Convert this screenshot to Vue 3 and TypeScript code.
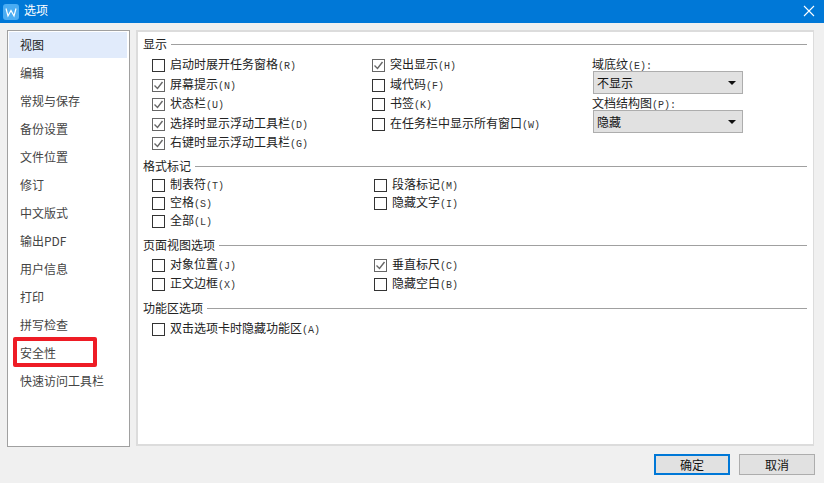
<script setup lang="ts">
interface Opt { t: string; k?: string; c?: boolean; dim?: boolean }
const nav = ['视图','编辑','常规与保存','备份设置','文件位置','修订','中文版式','输出PDF','用户信息','打印','拼写检查','安全性','快速访问工具栏']
const show1: Opt[] = [
  { t: '启动时展开任务窗格', k: '(R)' },
  { t: '屏幕提示', k: '(N)', c: true },
  { t: '状态栏', k: '(U)', c: true },
  { t: '选择时显示浮动工具栏', k: '(D)', c: true },
  { t: '右键时显示浮动工具栏', k: '(G)', c: true },
]
const show2: Opt[] = [
  { t: '突出显示', k: '(H)', c: true, dim: true },
  { t: '域代码', k: '(F)' },
  { t: '书签', k: '(K)' },
  { t: '在任务栏中显示所有窗口', k: '(W)' },
]
const fmt1: Opt[] = [{ t: '制表符', k: '(T)' }, { t: '空格', k: '(S)' }, { t: '全部', k: '(L)' }]
const fmt2: Opt[] = [{ t: '段落标记', k: '(M)' }, { t: '隐藏文字', k: '(I)' }]
const page1: Opt[] = [{ t: '对象位置', k: '(J)' }, { t: '正文边框', k: '(X)' }]
const page2: Opt[] = [{ t: '垂直标尺', k: '(C)', c: true }, { t: '隐藏空白', k: '(B)' }]
const groups = [
  { title: '格式标记', cols: [fmt1, fmt2], cls: 'g-fmt' },
  { title: '页面视图选项', cols: [page1, page2], cls: 'g-page' },
  { title: '功能区选项', cols: [[{ t: '双击选项卡时隐藏功能区', k: '(A)' }] as Opt[]], cls: 'g-rib' },
]
</script>

<template>
  <div class="win">
    <header class="title">
      <svg class="logo" width="16" height="16" viewBox="0 0 16 16">
        <rect width="16" height="16" rx="3" fill="#4badf3" />
        <path d="M3 4.5 L5 12 L8 6.5 L11 12 L13 4.5" fill="none" stroke="#fff" stroke-width="1.2" />
      </svg>
      <span class="title-text">选项</span>
      <svg class="close" width="12" height="12" viewBox="0 0 12 12">
        <path d="M1 1 L11 11 M11 1 L1 11" stroke="#fff" stroke-width="1.1" fill="none" />
      </svg>
    </header>
    <main class="content">
      <nav class="list">
        <div v-for="(n, i) in nav" :key="n" class="item" :class="{ sel: i === 0, mark: n === '安全性' }">{{ n }}</div>
      </nav>
      <section class="panel">
        <div class="group g-show">
          <div class="ghead"><span>显示</span><i></i></div>
          <div class="gbody">
            <div class="col c1">
              <label v-for="o in show1" :key="o.t" class="opt">
                <span class="box" :class="{ on: o.c }">
                  <svg v-if="o.c" width="11" height="11" viewBox="0 0 11 11"><path d="M1.5 5.5 L4.5 8.5 L9.5 2" fill="none" stroke="#666" stroke-width="1.4" /></svg>
                </span>
                <span>{{ o.t }}<b>{{ o.k }}</b></span>
              </label>
            </div>
            <div class="col c2">
              <label v-for="o in show2" :key="o.t" class="opt">
                <span class="box" :class="{ on: o.c }">
                  <svg v-if="o.c" width="11" height="11" viewBox="0 0 11 11"><path d="M1.5 5.5 L4.5 8.5 L9.5 2" fill="none" stroke="#666" stroke-width="1.4" /></svg>
                </span>
                <span>{{ o.t }}<b>{{ o.k }}</b></span>
              </label>
            </div>
            <div class="fields">
              <div class="flabel">域底纹<b>(E):</b></div>
              <div class="select"><span>不显示</span><em></em></div>
              <div class="flabel">文档结构图<b>(P):</b></div>
              <div class="select"><span>隐藏</span><em></em></div>
            </div>
          </div>
        </div>
        <div v-for="g in groups" :key="g.title" class="group" :class="g.cls">
          <div class="ghead"><span>{{ g.title }}</span><i></i></div>
          <div class="gbody">
            <div v-for="(col, ci) in g.cols" :key="ci" class="col" :class="ci === 0 ? 'c1' : 'c2b'">
              <label v-for="o in col" :key="o.t" class="opt">
                <span class="box" :class="{ on: o.c }">
                  <svg v-if="o.c" width="11" height="11" viewBox="0 0 11 11"><path d="M1.5 5.5 L4.5 8.5 L9.5 2" fill="none" stroke="#666" stroke-width="1.4" /></svg>
                </span>
                <span>{{ o.t }}<b>{{ o.k }}</b></span>
              </label>
            </div>
          </div>
        </div>
      </section>
    </main>
    <footer class="foot">
      <button class="btn primary">确定</button>
      <button class="btn">取消</button>
    </footer>
  </div>
</template>

<style>
html, body { margin: 0; background: #f0f0f0; }
</style>

<style scoped>
.win {
  width: 824px; height: 483px; display: flex; flex-direction: column; overflow: hidden;
  background: #f0f0f0; color: #222;
  font: 12px/16px "Noto Sans CJK SC", sans-serif;
}
.title { height: 23px; flex: none; background: #0078d7; display: flex; align-items: center; padding: 0 9px 0 3px; color: #fff; }
.logo { flex: none; }
.title-text { margin-left: 5px; flex: 1; margin-bottom: 4px; }
.close { flex: none; margin-bottom: 1px; }
.content { flex: none; height: 417px; margin-top: 7px; padding: 0 10px 0 7px; display: flex; gap: 6px; }
.list { width: 123px; height: 417px; box-sizing: border-box; background: #fff; border: 1px solid #a0a0a0; padding: 1px 2px 0 1px; flex: none; }
.item { height: 28px; padding-left: 11px; line-height: 25px; color: #444; position: relative; font-size: 12px; }
.item.sel { background: #e1ebfb; height: 26px; margin-bottom: 2px; color: #222; line-height: 26px; }
.item.mark::after {
  content: ""; position: absolute; left: 4px; top: -3px; width: 76px; height: 22px;
  border: 4px solid #ee1c25; border-radius: 2px;
}
.panel { flex: 1; background: #fff; border-width: 2px 1px 2px 2px; border-style: solid; border-color: #dcdcdc; box-sizing: border-box; padding: 4px 6px 0 5px; height: 416px; }
.group { display: flex; flex-direction: column; }
.ghead { display: flex; align-items: center; height: 16px; gap: 4px; color: #222; }
.ghead i { flex: 1; height: 1px; background: #a0a0a0; }
.gbody { display: flex; padding-left: 9px; }
.col { display: flex; flex-direction: column; }
.c1 { width: 220px; }
.c2 { width: 220px; }
.c2b { width: 220px; padding-left: 2px; }
.g-show { height: 122px; }
.g-show .gbody { padding-top: 4px; }
.g-show .opt { height: 19.5px; }
.g-fmt { height: 79px; }
.g-fmt .gbody { padding-top: 2px; }
.g-fmt .opt { height: 18px; }
.g-page { height: 63px; }
.g-page .gbody { padding-top: 3px; }
.g-page .opt { height: 19px; }
.g-rib .gbody { padding-top: 4px; }
.opt { display: flex; align-items: center; gap: 5px; color: #222; white-space: nowrap; }
.box { width: 11px; height: 11px; border: 1px solid #333; background: #fff; flex: none; display: block; }
.box.on { border-color: #666; }
.box svg { display: block; }
b { font: 10px/16px "Liberation Mono", monospace; color: #333; }
.fields { display: flex; flex-direction: column; width: 150px; }
.flabel { height: 15px; line-height: 15px; color: #222; white-space: nowrap; }
.select { width: 148px; height: 21px; border: 1px solid #adadad; background: #e1e1e1; display: flex; align-items: center; justify-content: space-between; margin: 0 0 1px 1px; }
.select span { padding-left: 3px; color: #111; }
.select em { width: 0; height: 0; border-left: 4px solid transparent; border-right: 4px solid transparent; border-top: 4px solid #111; margin-right: 6px; }
.foot { flex: 1; display: flex; justify-content: flex-end; gap: 9px; padding: 7px 9px 0 0; }
.btn { width: 76px; height: 21px; padding: 0; box-sizing: border-box; background: #e1e1e1; border: 1px solid #adadad; font: 12px/16px "Noto Sans CJK SC", sans-serif; color: #111; }
.btn.primary { border: 2px solid #0078d7; }
</style>
